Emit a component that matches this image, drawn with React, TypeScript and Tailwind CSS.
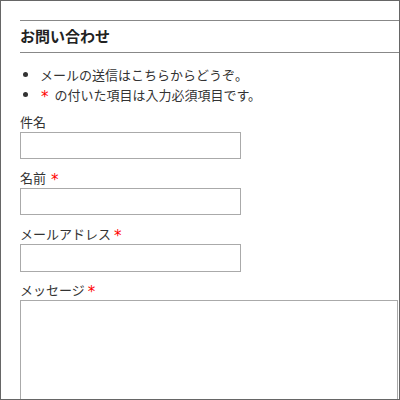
import React from "react";

const Req = ({ cls = "" }: { cls?: string }) => (
  <span
    className={`inline-block text-[#ff0000] text-[15px] leading-[14px] align-middle translate-y-[1px] ${cls}`}
    style={{ fontFamily: '"DejaVu Sans", sans-serif' }}
  >
    *
  </span>
);

export default function App() {
  return (
    <div
      className="w-[400px] h-[400px] overflow-hidden border border-[#666] bg-white pl-[19px] pt-[19px] text-[#333] text-[13px] leading-[20px]"
      style={{ fontFamily: '"Noto Sans CJK JP", "Noto Sans", sans-serif' }}
    >
      <div className="border-t border-b border-[#888] h-[33px] flex items-center pb-[2px]">
        <h1 className="text-[15px] font-bold text-[#222]">お問い合わせ</h1>
      </div>
      <ul className="list-disc pl-[20px] mt-[12px]">
        <li>メールの送信はこちらからどうぞ。</li>
        <li>
          <Req cls="ml-[1px] mr-[3px]" /> の付いた項目は入力必須項目です。
        </li>
      </ul>
      <form className="mt-[7px]">
        <label className="block h-[20px]">件名</label>
        <input className="block w-[221px] h-[27px] border border-[#aaa] mb-[9px]" />
        <label className="block h-[20px]">
          名前 <Req cls="ml-[2px]" />
        </label>
        <input className="block w-[221px] h-[27px] border border-[#aaa] mb-[9px]" />
        <label className="block h-[20px]">
          メールアドレス <Req />
        </label>
        <input className="block w-[221px] h-[28px] border border-[#aaa] mb-[8px]" />
        <label className="block h-[20px]">
          メッセージ <Req />
        </label>
        <textarea className="block w-[378px] h-[150px] border border-[#aaa] resize-none" />
      </form>
    </div>
  );
}
